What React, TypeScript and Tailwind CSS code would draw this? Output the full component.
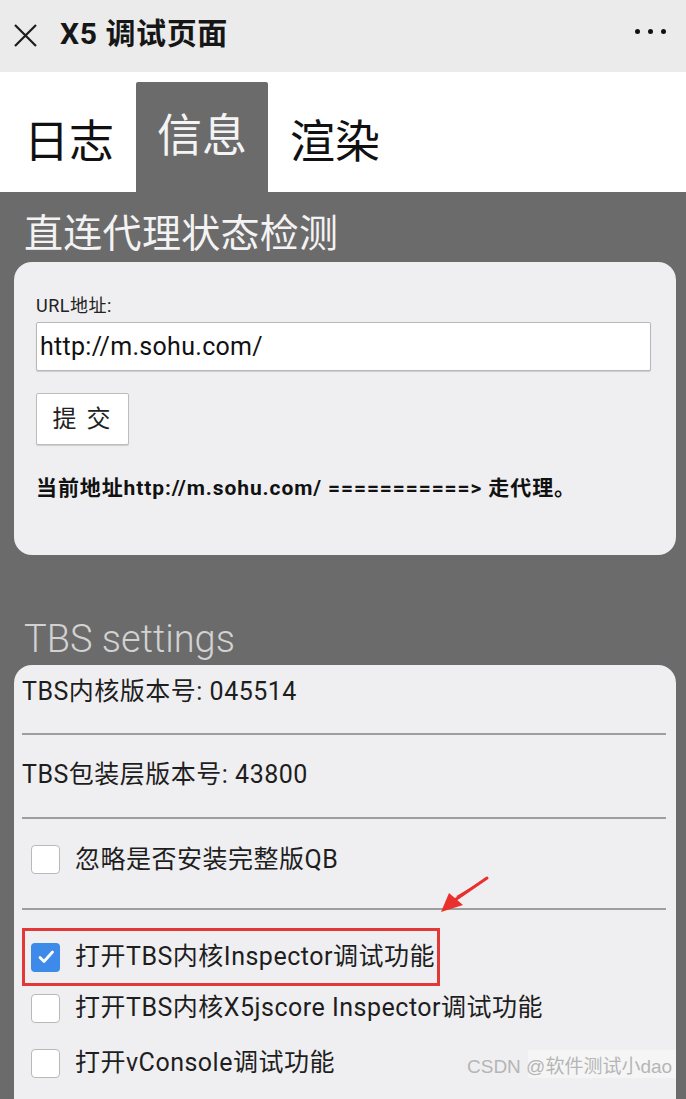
import React from 'react';

const Checkbox = ({ checked = false }: { checked?: boolean }) =>
  checked ? (
    <div className="w-[29px] h-[29px] rounded-[4px] bg-[#3e8ae8] flex items-center justify-center shrink-0">
      <svg width="20" height="20" viewBox="0 0 20 20" fill="none">
        <path d="M4 10.5l4 4L16.5 5" stroke="white" strokeWidth="2.8" strokeLinecap="round" strokeLinejoin="round" />
      </svg>
    </div>
  ) : (
    <div className="w-[29px] h-[29px] rounded-[4px] bg-white border-[1.5px] border-[#b9b9b9] shrink-0" />
  );

const Divider = () => <div className="h-[2px] bg-[#9e9e9e] ml-[8px] mr-[10px]" />;

const App = () => {
  const tabs = ['日志', '信息', '渲染'];

  return (
    <div className="relative min-h-[1099px] bg-[#6b6b6b] font-['Roboto','Noto_Sans_CJK_SC',sans-serif] overflow-hidden">
      {/* Header */}
      <div className="h-[72px] bg-[#ebebeb] flex items-center pl-[13px] pr-[20px]">
        <svg width="25" height="25" viewBox="0 0 25 25" className="mt-[-2px]">
          <path d="M2 2L23 23M23 2L2 23" stroke="#1c1c1c" strokeWidth="2.2" />
        </svg>
        <div className="ml-[22px] text-[30px] tracking-[0.6px] font-bold text-[#161616] leading-none mt-[-4px]">X5 调试页面</div>
        <div className="ml-auto flex gap-[8px] items-center mt-[-10px]">
          <span className="w-[5px] h-[5px] rounded-full bg-[#111]" />
          <span className="w-[5px] h-[5px] rounded-full bg-[#111]" />
          <span className="w-[5px] h-[5px] rounded-full bg-[#111]" />
        </div>
      </div>

      {/* Tabs */}
      <div className="h-[120px] bg-white flex items-end pl-[2px]">
        {tabs.map((tab, i) =>
          i === 1 ? (
            <div key={tab} className="h-[110px] bg-[#6b6b6b] rounded-t-[2px] px-[21px] pt-[30px] text-[45px] leading-[50px] text-[#f4f4f4]">
              {tab}
            </div>
          ) : (
            <div key={tab} className="h-[110px] px-[22px] pt-[36px] text-[45px] leading-[50px] text-[#111]">
              {tab}
            </div>
          )
        )}
      </div>

      {/* Body */}
      <div className="pl-[14px] pr-[10px] pb-[40px]">
        <div className="pt-[20px] pl-[10px] text-[39px] tracking-[0.3px] leading-[44px] text-[#f3f3f3]">直连代理状态检测</div>

        <div className="mt-[6px] bg-[#efeff1] rounded-[18px] pl-[22px] pr-[25px] pt-[32px] pb-[56px]">
          <div className="text-[18px] tracking-[0.5px] leading-[24px] text-[#222]">URL地址:</div>
          <div className="mt-[4px] h-[49px] bg-white border-[1.5px] border-[#b7b7b7] rounded-[2px] shadow-[0_1px_1px_rgba(0,0,0,0.15)] flex items-center pl-[3px] text-[25px] tracking-[0.3px] text-[#111]">
            http://m.sohu.com/
          </div>
          <button className="mt-[22px] w-[93px] h-[52px] bg-white border-[1.5px] border-[#bdbdbd] rounded-[2px] shadow-[0_1px_1px_rgba(0,0,0,0.15)] text-[24px] tracking-[10px] pl-[8px] text-[#222]">
            提交
          </button>
          <div className="mt-[32px] text-[21px] tracking-[0.9px] leading-[22px] font-bold text-[#111]">
            当前地址http://m.sohu.com/ ===========&gt; 走代理。
          </div>
        </div>

        <div className="mt-[62px] pl-[10px] text-[38px] leading-[44px] font-light text-[#d2d2d2]">TBS settings</div>

        <div className="mt-[4px] bg-[#efeff1] rounded-t-[18px] pb-[60px] text-[25px] tracking-[0.5px] text-[#1e1e1e]">
          <div className="h-[68px] pt-[12px] pl-[8px] leading-[30px]">TBS内核版本号: 045514</div>
          <Divider />
          <div className="h-[82px] pt-[25px] pl-[8px] leading-[30px]">TBS包装层版本号: 43800</div>
          <Divider />
          <div className="h-[89px] pt-[26px] pl-[17px] flex items-start gap-[15px]">
            <Checkbox />
            <span className="leading-[30px]">忽略是否安装完整版QB</span>
          </div>
          <Divider />

          <div className="mt-[18px] ml-[8px] w-[418px] h-[58px] border-[3px] border-[#e23838] flex items-center pl-[6px] gap-[15px]">
            <Checkbox checked />
            <span className="leading-[30px]">打开TBS内核Inspector调试功能</span>
          </div>
          <div className="mt-[7px] pl-[17px] flex items-center gap-[15px] h-[30px]">
            <Checkbox />
            <span className="leading-[30px]">打开TBS内核X5jscore Inspector调试功能</span>
          </div>
          <div className="mt-[25px] pl-[17px] flex items-center gap-[15px] h-[30px]">
            <Checkbox />
            <span className="leading-[30px]">打开vConsole调试功能</span>
          </div>
        </div>
      </div>

      {/* Red annotation arrow */}
      <svg className="absolute left-[436px] top-[872px]" width="56" height="46" viewBox="0 0 56 46">
        <path d="M51 6L22 27L20.5 24Z" fill="#ea302c" />
        <path d="M5 40L13 21L27 33Z" fill="#ea302c" />
        <path d="M51 6L16 30" stroke="#ea302c" strokeWidth="3" strokeLinecap="round" />
      </svg>

      {/* Watermark */}
      <div className="absolute left-[528px] top-[1050px] w-[148px] h-[28px] bg-white/40" />
      <div className="absolute left-[467px] top-[1052px] text-[19px] leading-[30px] text-[#b5b5b5] font-['Liberation_Sans','Noto_Sans_CJK_SC',sans-serif]">
        CSDN @软件测试小dao
      </div>
    </div>
  );
};

export default App;
